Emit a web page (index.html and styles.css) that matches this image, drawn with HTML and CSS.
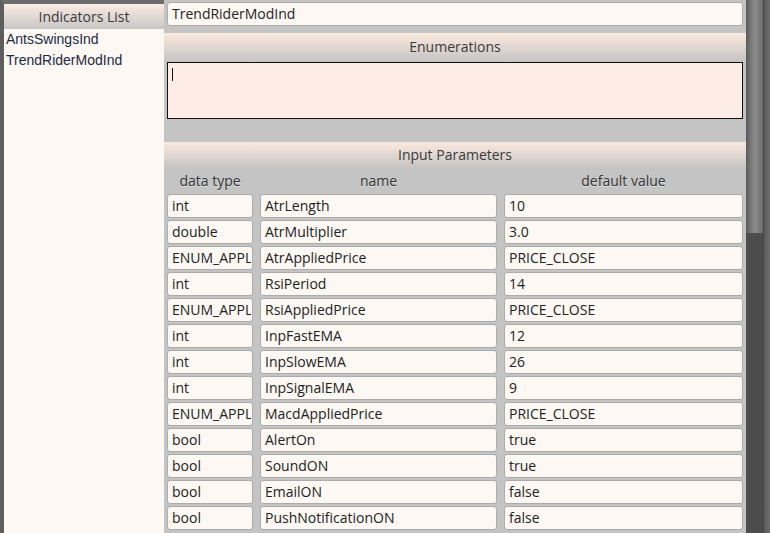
FILE: index.html
```html
<!DOCTYPE html>
<html lang="en">
<head>
    <meta charset="UTF-8">
    <title>Indicator Editor</title>
    <link rel="stylesheet" href="styles.css">
</head>
<body>
    <div class="app">
        <div class="sidebar">
            <div class="bar-title">Indicators List</div>
            <div class="list">
                <div class="list-item">AntsSwingsInd</div>
                <div class="list-item">TrendRiderModInd</div>
            </div>
        </div>

        <div class="main">
            <div class="name-row">
                <div class="field">TrendRiderModInd</div>
            </div>

            <div class="section">
                <div class="bar-title">Enumerations</div>
                <div class="enum-box"><span class="caret"></span></div>
            </div>

            <div class="section params">
                <div class="bar-title">Input Parameters</div>
                <div class="grid">
                    <div class="col-head">data type</div>
                    <div class="col-head">name</div>
                    <div class="col-head">default value</div>

                    <div class="field">int</div><div class="field">AtrLength</div><div class="field">10</div>
                    <div class="field">double</div><div class="field">AtrMultiplier</div><div class="field">3.0</div>
                    <div class="field"><span class="clip">ENUM_APPLIED_PRICE</span></div><div class="field">AtrAppliedPrice</div><div class="field">PRICE_CLOSE</div>
                    <div class="field">int</div><div class="field">RsiPeriod</div><div class="field">14</div>
                    <div class="field"><span class="clip">ENUM_APPLIED_PRICE</span></div><div class="field">RsiAppliedPrice</div><div class="field">PRICE_CLOSE</div>
                    <div class="field">int</div><div class="field">InpFastEMA</div><div class="field">12</div>
                    <div class="field">int</div><div class="field">InpSlowEMA</div><div class="field">26</div>
                    <div class="field">int</div><div class="field">InpSignalEMA</div><div class="field">9</div>
                    <div class="field"><span class="clip">ENUM_APPLIED_PRICE</span></div><div class="field">MacdAppliedPrice</div><div class="field">PRICE_CLOSE</div>
                    <div class="field">bool</div><div class="field">AlertOn</div><div class="field">true</div>
                    <div class="field">bool</div><div class="field">SoundON</div><div class="field">true</div>
                    <div class="field">bool</div><div class="field">EmailON</div><div class="field">false</div>
                    <div class="field">bool</div><div class="field">PushNotificationON</div><div class="field">false</div>
                </div>
            </div>
        </div>

        <div class="scrollbar">
            <div class="thumb"></div>
        </div>
    </div>
</body>
</html>
```

FILE: styles.css
```css
html, body {
    margin: 0;
    height: 100%;
    overflow: hidden;
}

body {
    font-family: 'Open Sans', sans-serif;
    font-size: 14px;
    color: #2a2a3a;
    background-color: #c4c4c4;
}

.app {
    display: flex;
    height: 533px;
}

/* left list */
.sidebar {
    width: 160px;
    border-left: 4px solid #5e5e5e;
    border-top: 4px solid #6c6c6c;
    background-color: #fdf8f4;
    display: flex;
    flex-direction: column;
}

.bar-title {
    height: 25px;
    line-height: 25px;
    text-align: center;
    color: #3a3a3a;
    background: linear-gradient(#fcebe2, #c6c6c6);
}

.list {
    padding: 0 0 0 2px;
    font-family: 'Liberation Sans', sans-serif;
}

.list-item {
    height: 21px;
    line-height: 20px;
    color: #1c2a44;
}

/* right side */
.main {
    width: 582px;
    display: flex;
    flex-direction: column;
}

.name-row {
    padding: 2px 3px 0 3px;
}

.field {
    height: 22px;
    line-height: 22px;
    padding: 0 4px;
    background-color: #fdf8f4;
    border: 1px solid #acacac;
    border-radius: 3px;
    white-space: nowrap;
    overflow: hidden;
    color: #222;
}

/* long type names get cut at the cell edge */
.clip {
    display: block;
    overflow: hidden;
    margin-right: -3px;
}

.section {
    margin-top: 7px;
}

.section .bar-title {
    height: 29px;
    line-height: 28px;
    background: linear-gradient(#fde9df, #c4c4c4);
}

.enum-box {
    margin: 0 3px;
    height: 55px;
    background-color: #fdede5;
    border: 1px solid #111;
    position: relative;
}

.caret {
    position: absolute;
    left: 4px;
    top: 5px;
    width: 1px;
    height: 13px;
    background-color: #111;
}

.params {
    margin-top: 23px;
}

.params .bar-title {
    height: 26px;
    line-height: 26px;
}

.grid {
    display: grid;
    grid-template-columns: 86px 237px 239px;
    column-gap: 7px;
    row-gap: 2px;
    padding: 0 3px;
}

.col-head {
    height: 24px;
    line-height: 26px;
    text-align: center;
    color: #333;
    text-shadow: 0 1px 0 #e0e0e0;
}

/* scrollbar on the right */
.scrollbar {
    width: 24px;
    background: linear-gradient(to right, #4c4c4c 0, #4c4c4c 17px, #333 17px, #5a5a5a 18px, #6e6e6e 24px);
}

.thumb {
    width: 17px;
    height: 233px;
    background: linear-gradient(to right, #5a5a5a, #7a7a7a 30%, #8c8c8c 55%, #6a6a6a);
}
```
